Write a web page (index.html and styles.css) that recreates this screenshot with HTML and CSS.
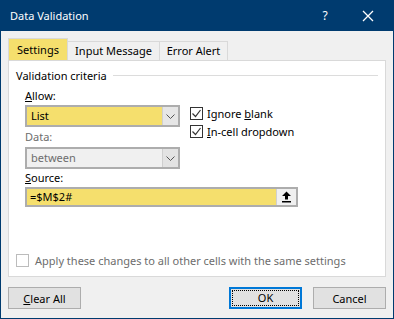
FILE: index.html
```html
<!DOCTYPE html>
<html lang="en">
<head>
  <meta charset="UTF-8">
  <title>Data Validation</title>
  <link rel="stylesheet" href="styles.css">
</head>
<body>
  <div class="dialog">
    <div class="titlebar">
      <span class="title">Data Validation</span>
      <span class="help">?</span>
      <span class="close">
        <svg width="12" height="12" viewBox="0 0 12 12"><path d="M1 1 L11 11 M11 1 L1 11" stroke="#fff" stroke-width="1.3"/></svg>
      </span>
    </div>

    <div class="content">
      <div class="tabs">
        <div class="tab active">Settings</div>
        <div class="tab tab-input">Input Message</div>
        <div class="tab tab-error">Error Alert</div>
      </div>

      <div class="panel">
        <div class="group-title"><span>Validation criteria</span><span class="rule"></span></div>

        <div class="criteria">
          <div class="fields">
            <div class="label"><u>A</u>llow:</div>
            <div class="combo">
              <span class="value">List</span>
              <span class="arrow"><svg width="9" height="5" viewBox="0 0 9 5"><path d="M0.5 0.5 L4.5 4.5 L8.5 0.5" fill="none" stroke="#555" stroke-width="1"/></svg></span>
            </div>
            <div class="label muted">Data:</div>
            <div class="combo disabled">
              <span class="value">between</span>
              <span class="arrow"><svg width="9" height="5" viewBox="0 0 9 5"><path d="M0.5 0.5 L4.5 4.5 L8.5 0.5" fill="none" stroke="#555" stroke-width="1"/></svg></span>
            </div>
          </div>
          <div class="checks">
            <label class="check"><span class="box on"><svg width="11" height="11" viewBox="0 0 11 11"><path d="M1.5 5.5 L4.5 8.5 L9.5 2" fill="none" stroke="#333" stroke-width="1.2"/></svg></span><span>Ignore <u>b</u>lank</span></label>
            <label class="check"><span class="box on"><svg width="11" height="11" viewBox="0 0 11 11"><path d="M1.5 5.5 L4.5 8.5 L9.5 2" fill="none" stroke="#333" stroke-width="1.2"/></svg></span><span><u>I</u>n-cell dropdown</span></label>
          </div>
        </div>

        <div class="label source-label"><u>S</u>ource:</div>
        <div class="source">
          <span class="value">=$M$2#</span>
          <span class="collapse">
            <svg width="11" height="12" viewBox="0 0 11 12"><path d="M5.5 0.5 L10 5 L7 5 L7 8.5 L4 8.5 L4 5 L1 5 Z" fill="#000"/><rect x="1" y="10" width="9" height="1.5" fill="#000"/></svg>
          </span>
        </div>

        <label class="check apply"><span class="box"></span><span>Apply these changes to all other cells with the same settings</span></label>
      </div>

      <div class="buttons">
        <button class="btn"><u>C</u>lear All</button>
        <span class="spacer"></span>
        <button class="btn default"><span class="focus">OK</span></button>
        <button class="btn">Cancel</button>
      </div>
    </div>
  </div>
</body>
</html>
```

FILE: styles.css
```css
html, body { margin: 0; padding: 0; }
body { font-family: "Noto Sans", "Open Sans", sans-serif; font-size: 11px; color: #000; background: #f0f0f0; }

.dialog { width: 394px; height: 319px; box-sizing: border-box; border: 1px solid #003b6f; border-top: none; background: #f0f0f0; display: flex; flex-direction: column; }

.titlebar { height: 31px; background: #003b6f; color: #fff; display: flex; align-items: center; margin: 0 -1px; padding: 0 0 0 10px; }
.title { flex: 1; font-size: 11px; }
.help { width: 14px; text-align: center; margin-right: 30px; font-size: 12px; }
.close { width: 12px; display: flex; margin-right: 20px; }

.content { flex: 1; padding: 7px 7px 0 7px; display: flex; flex-direction: column; }

.tabs { display: flex; align-items: flex-end; height: 22px; }
.tab { height: 19px; box-sizing: border-box; border: 1px solid #d9d9d9; border-bottom: none; border-left: none; line-height: 18px; text-align: center; background: #f0f0f0; }
.tab.active { width: 60px; height: 22px; line-height: 22px; background: #f5df6d; border-left: 1px solid #d9d9d9; }
.tab-input { width: 92px; }
.tab-error { width: 68px; }

.panel { height: 217px; box-sizing: border-box; border: 1px solid #d9d9d9; background: #fff; padding: 6px 7px 0 7px; display: flex; flex-direction: column; }

.group-title { display: flex; align-items: center; height: 16px; }
.group-title .rule { flex: 1; height: 1px; background: #dcdcdc; margin: 0 0 0 6px; }

.criteria { display: flex; padding-left: 9px; margin-top: 5px; }
.fields { width: 155px; }
.label { height: 16px; line-height: 16px; }
.label.muted { color: #6d6d6d; margin-top: 2px; }
.combo { height: 22px; box-sizing: border-box; border: 2px solid #adadad; background: #f5df6d; display: flex; align-items: stretch; margin-top: 1px; }
.combo .value { flex: 1; padding-left: 4px; line-height: 18px; }
.combo .arrow { width: 15px; background: #e6e6e6; border-left: 1px solid #cfcfcf; display: flex; align-items: center; justify-content: center; }
.combo.disabled { background: #f0f0f0; color: #6d6d6d; margin-top: 2px; }
.combo.disabled .arrow { background: #e3e3e3; }

.checks { padding-left: 10px; padding-top: 18px; display: flex; flex-direction: column; gap: 4px; }
.check { display: flex; align-items: center; height: 14px; }
.box { width: 13px; height: 13px; box-sizing: border-box; border: 1px solid #333; background: #fff; display: flex; align-items: center; justify-content: center; margin-right: 4px; }

.source-label { margin: 1px 0 0 9px; }
.source { width: 273px; height: 20px; box-sizing: border-box; border: 2px solid #adadad; margin: 1px 0 0 9px; display: flex; }
.source .value { flex: 1; background: #f5df6d; line-height: 16px; padding-left: 3px; }
.source .collapse { width: 19px; background: #f0f0f0; border-left: 1px solid #d0d0d0; display: flex; align-items: center; justify-content: center; }

.apply { margin-top: auto; margin-bottom: 9px; color: #6d6d6d; }
.apply .box { border-color: #bcbcbc; margin-right: 6px; }

.buttons { display: flex; margin-top: 10px; gap: 11px; }
.spacer { flex: 1; }
.btn { width: 73px; height: 22px; box-sizing: border-box; border: 1px solid #adadad; background: #e1e1e1; font-family: inherit; font-size: 11px; color: #000; padding: 0; }
.btn.default { border: 2px solid #0078d7; padding: 1px; }
.btn .focus { display: block; height: 100%; box-sizing: border-box; border: 1px dotted #000; line-height: 14px; }
```
